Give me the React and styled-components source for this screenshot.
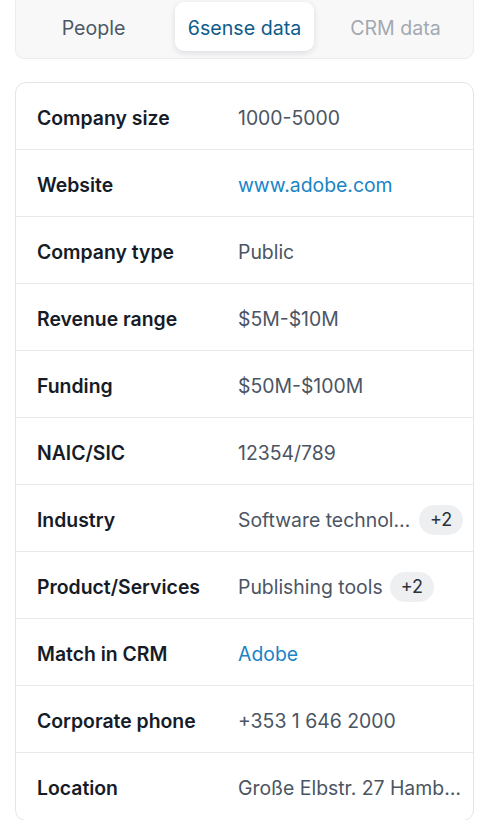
import React from "react";
import styled, { createGlobalStyle } from "styled-components";

const Global = createGlobalStyle`
  html, body { margin: 0; padding: 0; background: #ffffff; }
  body { font-family: Inter, "Noto Sans", sans-serif; -webkit-font-smoothing: antialiased; }
`;

const Page = styled.div`
  padding: 0 11px 0 15px;
  display: flex;
  flex-direction: column;
  gap: 23px;
`;

const TabBar = styled.div`
  margin-top: -7px;
  display: flex;
  gap: 12px;
  padding: 8px 8px 7px;
  background: #f8f8f9;
  border: 1px solid #ececef;
  border-radius: 9px;
`;

const Tab = styled.button`
  flex: 1;
  height: 49px;
  padding: 2px 0 0;
  border: 0;
  border-radius: 9px;
  font-family: inherit;
  font-size: 19.6px;
  font-weight: 400;
  cursor: pointer;
  background: ${(p) => (p.$active ? "#ffffff" : "transparent")};
  box-shadow: ${(p) => (p.$active ? "0 2px 6px rgba(16, 24, 40, 0.12)" : "none")};
  color: ${(p) => (p.$active ? "#0d5c8c" : p.$muted ? "#a3a8b0" : "#4d5866")};
`;

const Card = styled.div`
  border: 1px solid #e4e5e8;
  border-radius: 11px;
  overflow: hidden;
`;

const Row = styled.div`
  display: grid;
  grid-template-columns: 201px 1fr;
  align-items: center;
  height: 63.05px;
  padding: 3px 0 0 21px;
  border-top: ${(p) => (p.$first ? "none" : "1px solid #e8e9ec")};
`;

const Label = styled.div`
  font-size: 19.4px;
  font-weight: 600;
  color: #161c27;
  white-space: nowrap;
`;

const Value = styled.div`
  display: flex;
  align-items: center;
  gap: 7px;
  min-width: 0;
  font-size: 19.4px;
  color: ${(p) => (p.$link ? "#1a84c6" : "#4b5563")};
`;

const Clip = styled.span`
  white-space: nowrap;
  overflow: hidden;
  text-overflow: ellipsis;
  max-width: ${(p) => p.$max || "none"};
`;

const Pill = styled.span`
  flex: none;
  height: 30px;
  padding: 0 11px;
  display: inline-flex;
  align-items: center;
  border-radius: 15px;
  background: #eeeff1;
  color: #2b313b;
  font-size: 18px;
`;

const rows = [
  { label: "Company size", value: "1000-5000" },
  { label: "Website", value: "www.adobe.com", link: true },
  { label: "Company type", value: "Public" },
  { label: "Revenue range", value: "$5M-$10M" },
  { label: "Funding", value: "$50M-$100M" },
  { label: "NAIC/SIC", value: "12354/789" },
  { label: "Industry", value: "Software technology", max: "174px", extra: "+2" },
  { label: "Product/Services", value: "Publishing tools", extra: "+2" },
  { label: "Match in CRM", value: "Adobe", link: true },
  { label: "Corporate phone", value: "+353 1 646 2000" },
  { label: "Location", value: "Große Elbstr. 27 Hamburg", max: "224px" },
];

export default function App() {
  return (
    <>
      <Global />
      <Page>
        <TabBar>
          <Tab>People</Tab>
          <Tab $active>6sense data</Tab>
          <Tab $muted>CRM data</Tab>
        </TabBar>
        <Card>
          {rows.map((r, i) => (
            <Row key={r.label} $first={i === 0}>
              <Label>{r.label}</Label>
              <Value $link={r.link}>
                <Clip $max={r.max}>{r.value}</Clip>
                {r.extra && <Pill>{r.extra}</Pill>}
              </Value>
            </Row>
          ))}
        </Card>
      </Page>
    </>
  );
}
